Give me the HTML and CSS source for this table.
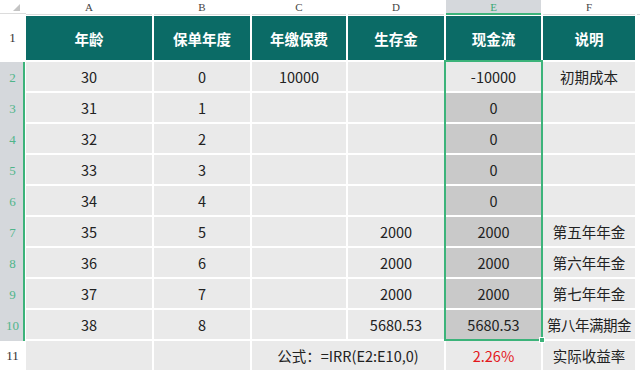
FILE: index.html
```html
<!DOCTYPE html>
<html lang="zh">
<head>
<meta charset="utf-8">
<link rel="stylesheet" href="styles.css">
</head>
<body>
<div class="sheet">
  <div class="corner"><span class="tri"></span></div>
  <div class="ch">A</div>
  <div class="ch">B</div>
  <div class="ch">C</div>
  <div class="ch">D</div>
  <div class="ch sel">E</div>
  <div class="ch">F</div>
  <div class="ch tail"></div>

  <div class="rh r1">1</div>
  <div class="hd">年龄</div>
  <div class="hd">保单年度</div>
  <div class="hd">年缴保费</div>
  <div class="hd">生存金</div>
  <div class="hd">现金流</div>
  <div class="hd">说明</div>
  <div class="tail"></div>

  <div class="rh on">2</div>
  <div class="c">30</div><div class="c">0</div><div class="c">10000</div><div class="c"></div><div class="c e">-10000</div><div class="c">初期成本</div><div class="tail"></div>

  <div class="rh on">3</div>
  <div class="c">31</div><div class="c">1</div><div class="c"></div><div class="c"></div><div class="c e s">0</div><div class="c"></div><div class="tail"></div>

  <div class="rh on">4</div>
  <div class="c">32</div><div class="c">2</div><div class="c"></div><div class="c"></div><div class="c e s">0</div><div class="c"></div><div class="tail"></div>

  <div class="rh on">5</div>
  <div class="c">33</div><div class="c">3</div><div class="c"></div><div class="c"></div><div class="c e s">0</div><div class="c"></div><div class="tail"></div>

  <div class="rh on">6</div>
  <div class="c">34</div><div class="c">4</div><div class="c"></div><div class="c"></div><div class="c e s">0</div><div class="c"></div><div class="tail"></div>

  <div class="rh on">7</div>
  <div class="c">35</div><div class="c">5</div><div class="c"></div><div class="c">2000</div><div class="c e s">2000</div><div class="c">第五年年金</div><div class="tail"></div>

  <div class="rh on">8</div>
  <div class="c">36</div><div class="c">6</div><div class="c"></div><div class="c">2000</div><div class="c e s">2000</div><div class="c">第六年年金</div><div class="tail"></div>

  <div class="rh on">9</div>
  <div class="c">37</div><div class="c">7</div><div class="c"></div><div class="c">2000</div><div class="c e s">2000</div><div class="c">第七年年金</div><div class="tail"></div>

  <div class="rh on">10</div>
  <div class="c">38</div><div class="c">8</div><div class="c"></div><div class="c">5680.53</div><div class="c e s">5680.53</div><div class="c narrow">第八年满期金</div><div class="tail"></div>

  <div class="rh r11">11</div>
  <div class="c"></div><div class="c"></div><div class="c merged">公式：=IRR(E2:E10,0)</div><div class="c red">2.26%</div><div class="c">实际收益率</div><div class="tail"></div>

  <div class="selbox"><span class="handle"></span></div>
</div>
</body>
</html>
```
FILE: styles.css
```css
html, body {
  margin: 0;
  padding: 0;
  background: #ffffff;
}
body {
  width: 640px;
  height: 373px;
  overflow: hidden;
}
.sheet {
  position: relative;
  display: grid;
  grid-template-columns: 24px 126px 96px 94px 96px 95px 92px 1fr;
  grid-template-rows: 14px 44px repeat(10, 29px);
  column-gap: 2px;
  row-gap: 2px;
  background: #ffffff;
  font-family: "Noto Sans CJK SC", "Noto Sans", sans-serif;
  font-size: 14.5px;
  color: #222222;
}
.corner {
  position: relative;
  background: #ffffff;
  border-bottom: 1px solid #dcdcdc;
  margin-right: -2px;
}
.tri {
  position: absolute;
  right: 6px;
  bottom: 2px;
  width: 0;
  height: 0;
  border-left: 7px solid transparent;
  border-bottom: 7px solid #c4c4c4;
}
.ch {
  display: flex;
  align-items: center;
  justify-content: center;
  font-family: "Liberation Serif", "DejaVu Serif", serif;
  font-size: 11px;
  color: #444444;
  background: #ffffff;
  border-bottom: 1px solid #dcdcdc;
  line-height: 1;
  margin-bottom: -1px;
  padding-top: 1px;
}
.ch.sel {
  background: #d5d8dc;
  color: #3aa874;
  border-bottom: 2px solid #3cb37a;
}
.ch.tail {
  background: #ffffff;
}
.rh {
  display: flex;
  align-items: center;
  justify-content: center;
  font-family: "Liberation Serif", "DejaVu Serif", serif;
  font-size: 13px;
  color: #333333;
  background: #ffffff;
  margin-right: -1px;
}
.rh.on {
  background: #d5d8dc;
  color: #4fb58a;
  box-shadow: inset -2px 0 0 #3cb37a;
  margin-bottom: -2px;
}
.hd {
  display: flex;
  align-items: center;
  justify-content: center;
  background: #0b6b66;
  color: #ffffff;
  font-weight: bold;
  font-size: 14.5px;
}
.c {
  display: flex;
  align-items: center;
  justify-content: center;
  background: #eaeaea;
  white-space: nowrap;
}
.c.s {
  background: #c9c9c9;
}
.c.narrow {
  letter-spacing: -0.5px;
}
.c.merged {
  grid-column: span 2;
}
.c.red {
  color: #e3171c;
}
.tail {
  background: #ffffff;
}
.selbox {
  position: absolute;
  left: 444px;
  top: 60px;
  width: 95px;
  height: 277px;
  border: 2px solid #3cb37a;
  pointer-events: none;
}
.handle {
  position: absolute;
  right: -4px;
  bottom: -4px;
  width: 4px;
  height: 4px;
  background: #3cb37a;
  border: 1px solid #ffffff;
}
```
